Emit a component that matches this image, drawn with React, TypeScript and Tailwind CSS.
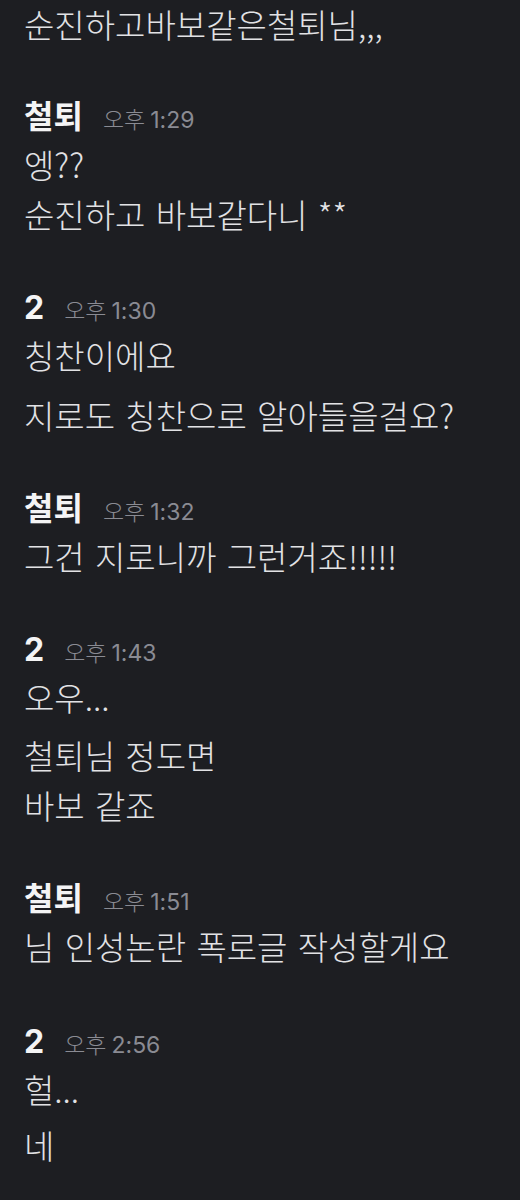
import React from "react";

type Msg = { lines: string[]; gap?: string };
type Group = { name: string; time: string; ampm: string; msgs: Msg[]; top?: string };

const groups: Group[] = [
  {
    name: "철퇴",
    ampm: "오후",
    time: "1:29",
    msgs: [{ lines: ["엥??", "순진하고 바보같다니 **"] }],
  },
  {
    name: "2",
    ampm: "오후",
    time: "1:30",
    msgs: [
      { lines: ["칭찬이에요"] },
      { lines: ["지로도 칭찬으로 알아들을걸요?"], gap: "mt-[10px]" },
    ],
  },
  {
    name: "철퇴",
    ampm: "오후",
    time: "1:32",
    msgs: [{ lines: ["그건 지로니까 그런거죠!!!!!"] }],
  },
  {
    name: "2",
    ampm: "오후",
    time: "1:43",
    msgs: [
      { lines: ["오우..."] },
      { lines: ["철퇴님 정도면", "바보 같죠"], gap: "mt-2" },
    ],
  },
  {
    name: "철퇴",
    ampm: "오후",
    time: "1:51",
    msgs: [{ lines: ["님 인성논란 폭로글 작성할게요"] }],
  },
  {
    name: "2",
    ampm: "오후",
    time: "2:56",
    top: "mt-[49px]",
    msgs: [{ lines: ["헐..."] }, { lines: ["네"], gap: "mt-[6px]" }],
  },
];

const msgFont =
  "font-['Noto_Sans_CJK_KR','Noto_Sans_CJK_SC',sans-serif] font-light text-[33px] leading-[50px] text-[#e2e2e5] [word-spacing:3px]";

export default function App() {
  return (
    <div className="min-h-[1200px] w-full bg-[#1d1e22] px-6 overflow-hidden">
      <div className={`${msgFont} !leading-[48px]`}>순진하고바보같은철퇴님,,,</div>
      {groups.map((g, gi) => (
        <div key={gi} className={g.top ?? "mt-[47px]"}>
          <div className="flex items-baseline h-[44px]">
            <span className="font-['Inter','Noto_Sans_CJK_KR',sans-serif] font-bold text-[32px] leading-[44px] text-[#f4f4f5]">
              {g.name}
            </span>
            <span className="ml-5 font-['Inter','Noto_Sans_CJK_KR',sans-serif] text-[23px] leading-[44px] text-[#8a8b93]">
              <span className="font-['Noto_Sans_CJK_KR',sans-serif] font-light">{g.ampm}</span>
              <span className="ml-[5px]">{g.time}</span>
            </span>
          </div>
          {g.msgs.map((m, mi) => (
            <div key={mi} className={`${msgFont} ${mi > 0 ? m.gap ?? "mt-2" : ""}`}>
              {m.lines.map((l, li) => (
                <div key={li}>{l}</div>
              ))}
            </div>
          ))}
        </div>
      ))}
    </div>
  );
}
